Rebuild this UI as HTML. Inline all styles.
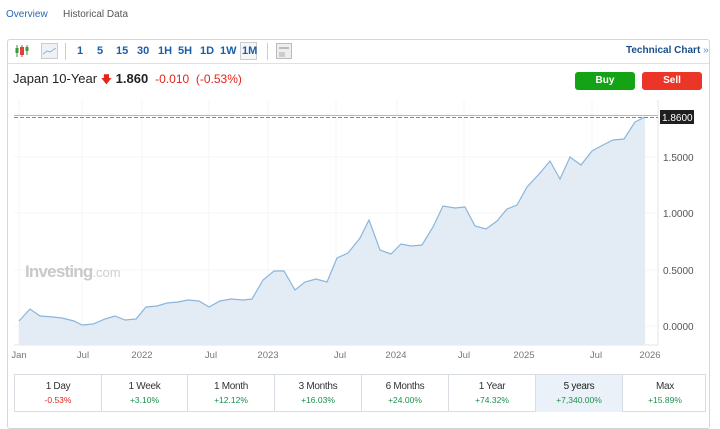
<!DOCTYPE html>
<html><head><meta charset="utf-8"><style>
*{margin:0;padding:0;box-sizing:border-box}
body{width:720px;height:417px;background:#fff;font-family:"Liberation Sans",sans-serif;position:relative;overflow:hidden}
.a{position:absolute;white-space:nowrap}
.tb{font-size:11px;font-weight:bold;color:#1a5fa8;top:45px}
.cell{position:absolute;top:0;height:37px;border-right:1px solid #d8dde3;text-align:center;font-size:10px;color:#333}
.cell b{display:block;font-weight:normal;margin-top:6px;letter-spacing:-0.3px}
.cell i{display:block;font-style:normal;font-size:8.5px;margin-top:3px}
.g{color:#19904a}.r{color:#e3241b}
</style></head><body>
<div class="a" style="left:6px;top:9px;font-size:10px;color:#2a67b1">Overview</div>
<div class="a" style="left:63px;top:9px;font-size:10px;color:#555">Historical Data</div>
<div class="a" style="left:7px;top:39px;width:703px;height:390px;border:1px solid #d6d6d6;border-radius:3px"></div>
<div class="a" style="left:8px;top:63px;width:701px;height:1px;background:#e0e0e0"></div>
<svg class="a" style="left:14px;top:43px" width="16" height="16"><line x1="3" y1="2" x2="3" y2="14" stroke="#3a9a3a"/><rect x="1.5" y="5" width="3" height="5" fill="#3a9a3a"/><line x1="8" y1="2" x2="8" y2="14" stroke="#d33"/><rect x="6" y="4" width="4" height="8" fill="#e04040"/><line x1="13" y1="2" x2="13" y2="12" stroke="#3a9a3a"/><rect x="11.5" y="4" width="3" height="4" fill="#3a9a3a"/></svg>
<div class="a" style="left:41px;top:43px;width:17px;height:16px;background:#eef1f5;border:1px solid #ccc"><svg width="15" height="14"><polyline points="1,10 5,7 8,8 14,4" fill="none" stroke="#8fb0d6"/></svg></div>
<div class="a" style="left:65px;top:43px;width:1px;height:17px;background:#ccc"></div>
<div class="a tb" style="left:77px">1</div>
<div class="a tb" style="left:97px">5</div>
<div class="a tb" style="left:116px">15</div>
<div class="a tb" style="left:137px">30</div>
<div class="a tb" style="left:158px">1H</div>
<div class="a tb" style="left:178px">5H</div>
<div class="a tb" style="left:200px">1D</div>
<div class="a tb" style="left:220px">1W</div>
<div class="a" style="left:240px;top:42px;width:17px;height:18px;border:1px solid #ccc;background:#f6f6f6"></div>
<div class="a tb" style="left:242px">1M</div>
<div class="a" style="left:267px;top:43px;width:1px;height:17px;background:#ccc"></div>
<div class="a" style="left:276px;top:43px;width:16px;height:16px;border:1px solid #bbb;background:#eee"><div style="margin:3px 2px;height:2px;background:#bbb"></div><div style="margin:1px 2px;height:5px;width:6px;background:#ccc"></div></div>
<div class="a" style="left:626px;top:45px;font-size:10px;font-weight:bold;color:#1a4f8a">Technical Chart <span style="color:#5b8fd0;font-weight:normal">»</span></div>
<div class="a" style="left:13px;top:71px;font-size:13px;color:#222">Japan 10-Year <span style="color:#e3241b;font-size:11px">&#129095;</span> <b>1.860</b> <span class="r" style="font-size:12px">&nbsp;-0.010 &nbsp;(-0.53%)</span></div>
<div class="a" style="left:575px;top:72px;width:60px;height:18px;background:#14a314;border-radius:3px;color:#fff;font-size:10px;font-weight:bold;text-align:center;line-height:18px">Buy</div>
<div class="a" style="left:642px;top:72px;width:60px;height:18px;background:#ea3527;border-radius:3px;color:#fff;font-size:10px;font-weight:bold;text-align:center;line-height:18px">Sell</div>
<svg class="a" style="left:0;top:0" width="720" height="417">
<g stroke="#f4f4f4">
<line x1="14" y1="157" x2="658" y2="157"/><line x1="14" y1="213" x2="658" y2="213"/><line x1="14" y1="270" x2="658" y2="270"/><line x1="14" y1="326" x2="658" y2="326"/>
<line x1="19" y1="100" x2="19" y2="345"/><line x1="82" y1="100" x2="82" y2="345"/><line x1="142" y1="100" x2="142" y2="345"/><line x1="209" y1="100" x2="209" y2="345"/><line x1="268" y1="100" x2="268" y2="345"/><line x1="336" y1="100" x2="336" y2="345"/><line x1="397" y1="100" x2="397" y2="345"/><line x1="464" y1="100" x2="464" y2="345"/><line x1="592" y1="100" x2="592" y2="345"/>
</g>
<line x1="658" y1="100" x2="658" y2="345" stroke="#e6e6e6"/>
<line x1="14" y1="345" x2="658" y2="345" stroke="#e6e6e6"/>
<text x="25" y="277" font-family="Liberation Sans" fill="#c9c9c9"><tspan font-weight="bold" font-size="17" letter-spacing="-0.8">Investing</tspan><tspan font-size="13" fill="#cfcfcf">.com</tspan></text>
<polygon fill="#e3ecf4" points="19,345 19,321 30,309 40,316 53,317 62,318 74,321 82,325 93,324 105,319 115,316 125,320 136,319 146,307 157,306 167,303 178,302 188,300 199,301 209,307 220,301 231,299 243,300 252,299 263,280 274,271 284,271 295,290 305,282 316,279 327,282 337,258 348,253 360,238 369,220 380,250 391,254 401,244 411,246 422,245 433,227 443,206 455,208 465,207 475,226 486,229 497,221 507,209 517,205 527,187 540,173 550,161 560,179 570,157 581,165 592,151 603,145 613,140 624,139 635,122 645,117 645,345"/>
<polyline fill="none" stroke="#8ab6dc" stroke-width="1.2" points="19,321 30,309 40,316 53,317 62,318 74,321 82,325 93,324 105,319 115,316 125,320 136,319 146,307 157,306 167,303 178,302 188,300 199,301 209,307 220,301 231,299 243,300 252,299 263,280 274,271 284,271 295,290 305,282 316,279 327,282 337,258 348,253 360,238 369,220 380,250 391,254 401,244 411,246 422,245 433,227 443,206 455,208 465,207 475,226 486,229 497,221 507,209 517,205 527,187 540,173 550,161 560,179 570,157 581,165 592,151 603,145 613,140 624,139 635,122 645,117"/>
<line x1="14" y1="115.5" x2="658" y2="115.5" stroke="#f0a0a0"/>
<line x1="14" y1="117.5" x2="658" y2="117.5" stroke="#888" stroke-dasharray="4,2"/>
<rect x="660" y="110" width="34" height="14" fill="#1e1e1e"/>
<text x="662" y="121" font-family="Liberation Sans" font-size="10" fill="#fff">1.8600</text>
<g font-family="Liberation Sans" font-size="10" fill="#555">
<text x="663" y="161">1.5000</text><text x="663" y="217">1.0000</text><text x="663" y="274">0.5000</text><text x="663" y="330">0.0000</text>
</g>
<g font-family="Liberation Sans" font-size="9.5" fill="#777" text-anchor="middle">
<text x="19" y="358">Jan</text><text x="83" y="358">Jul</text><text x="142" y="358">2022</text><text x="211" y="358">Jul</text><text x="268" y="358">2023</text><text x="340" y="358">Jul</text><text x="396" y="358">2024</text><text x="464" y="358">Jul</text><text x="524" y="358">2025</text><text x="596" y="358">Jul</text><text x="650" y="358">2026</text>
</g>
</svg>
<div class="a" style="left:14px;top:374px;width:692px;height:38px;border:1px solid #d8dde3">
<div class="cell" style="left:0;width:87px"><b>1 Day</b><i class="r">-0.53%</i></div>
<div class="cell" style="left:87px;width:86px"><b>1 Week</b><i class="g">+3.10%</i></div>
<div class="cell" style="left:173px;width:87px"><b>1 Month</b><i class="g">+12.12%</i></div>
<div class="cell" style="left:260px;width:87px"><b>3 Months</b><i class="g">+16.03%</i></div>
<div class="cell" style="left:347px;width:87px"><b>6 Months</b><i class="g">+24.00%</i></div>
<div class="cell" style="left:434px;width:87px"><b>1 Year</b><i class="g">+74.32%</i></div>
<div class="cell" style="left:521px;width:87px;background:#eaf1f8"><b style="color:#222">5 years</b><i class="g">+7,340.00%</i></div>
<div class="cell" style="left:608px;width:84px;border-right:none"><b>Max</b><i class="g">+15.89%</i></div>
</div>
</body></html>
